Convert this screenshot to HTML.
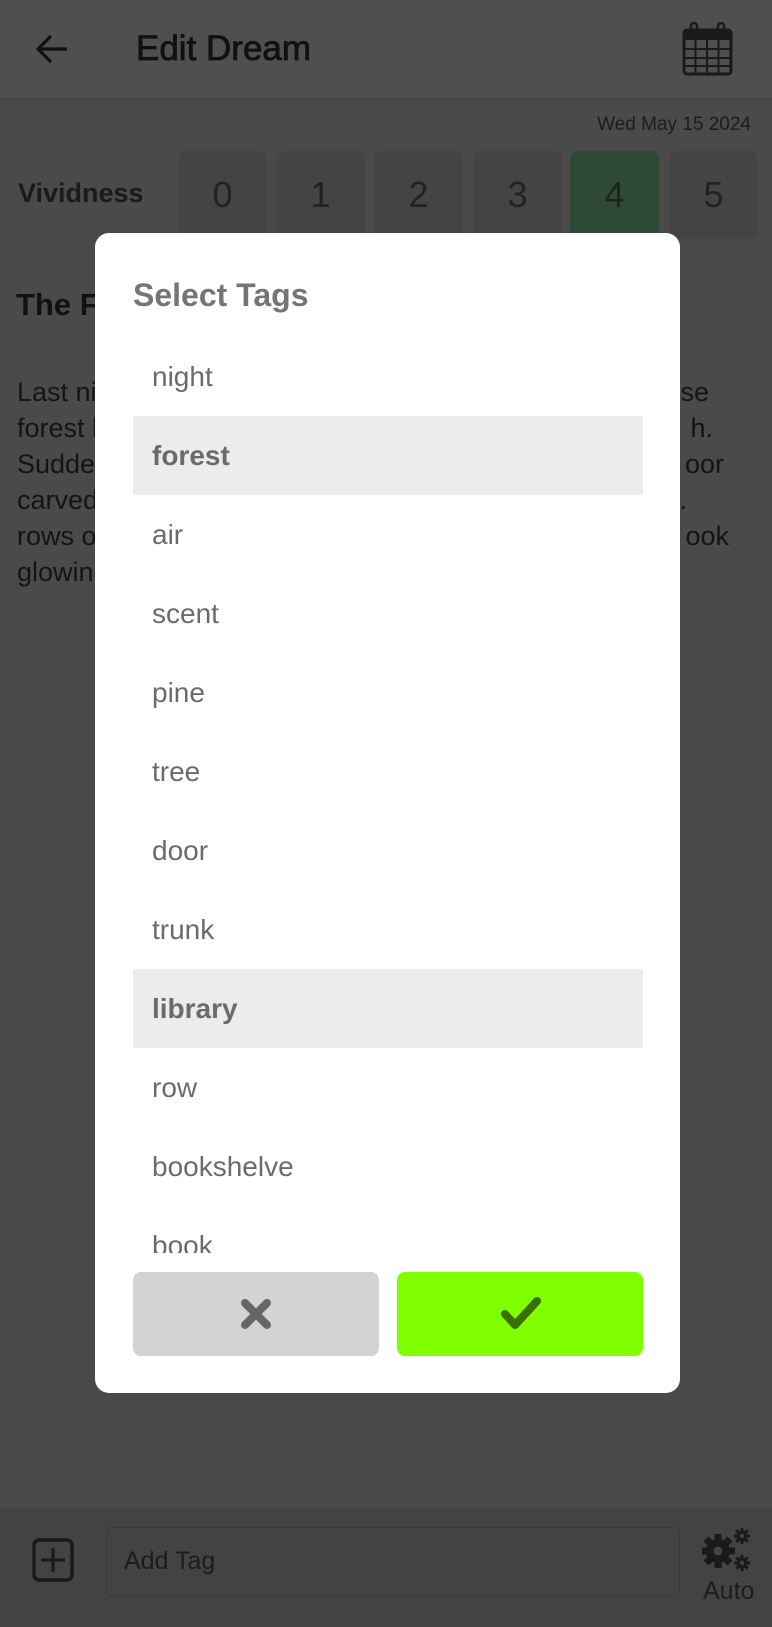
<!DOCTYPE html>
<html><head><meta charset="utf-8"><style>
*{margin:0;padding:0;box-sizing:border-box}
body{width:772px;height:1627px;background:#4a4a4a;font-family:"Liberation Sans",sans-serif;position:relative;overflow:hidden}
.abs{position:absolute}
.hdr{left:0;top:0;width:772px;height:100px;background:#4f4f4f;border-bottom:2px solid #454545}
.box{top:151px;width:89px;height:88px;background:#444;border-radius:8px;color:#222;font-size:36px;text-align:center;line-height:88px}
.p{left:17px;font-size:27px;color:#141414;white-space:nowrap;line-height:36px}
.r{font-size:27px;color:#141414;white-space:nowrap;line-height:36px}
.dlg{left:95px;top:233px;width:585px;height:1160px;background:#fff;border-radius:14px}
.row{position:absolute;left:38px;width:510px;height:79px;line-height:79px;padding-left:19px;font-size:28px;color:#6b6b6b}
.sel{background:#ececec;font-weight:bold}
.bar{left:0;top:1508px;width:772px;height:119px;background:#434343}
</style></head><body>
<div class="abs hdr"></div>
<svg class="abs" style="left:35px;top:33px" width="34" height="32" viewBox="0 0 34 32"><path d="M32 16H4M16 3L3 16l13 13" stroke="#111" stroke-width="3.2" fill="none"/></svg>
<div class="abs" style="left:136px;top:29px;font-size:35px;color:#111;-webkit-text-stroke:0.8px #111">Edit Dream</div>
<svg class="abs" style="left:682px;top:22px" width="51" height="54" viewBox="0 0 51 54"><rect x="2" y="8" width="47" height="44" rx="3" fill="none" stroke="#1a1a1a" stroke-width="3"/><rect x="2" y="8" width="47" height="10" fill="#1a1a1a"/><rect x="9" y="1" width="6" height="13" rx="3" fill="none" stroke="#1a1a1a" stroke-width="2.5"/><rect x="36" y="1" width="6" height="13" rx="3" fill="none" stroke="#1a1a1a" stroke-width="2.5"/><path d="M2 27H49M2 36H49M2 44H49M13.5 18V52M25 18V52M36.5 18V52" stroke="#1a1a1a" stroke-width="2"/></svg>
<div class="abs" style="right:21px;top:114px;font-size:19px;color:#1c1c1c">Wed May 15 2024</div>
<div class="abs" style="left:18px;top:178px;font-size:27px;font-weight:bold;color:#1a1a1a">Vividness</div>
<div class="abs box" style="left:178px">0</div>
<div class="abs box" style="left:276px">1</div>
<div class="abs box" style="left:374px">2</div>
<div class="abs box" style="left:473px">3</div>
<div class="abs box" style="left:570px;background:#2e4a34">4</div>
<div class="abs box" style="left:669px">5</div>
<div class="abs" style="left:16px;top:287px;font-size:31px;font-weight:bold;color:#111">The Forest Library</div>
<div class="abs p" style="top:374px">Last night I dreamt I was walking</div>
<div class="abs p" style="top:410px">forest lit only by moonlight</div>
<div class="abs p" style="top:446px">Suddenly I found a tree</div>
<div class="abs p" style="top:482px">carved into it and inside</div>
<div class="abs p" style="top:518px">rows of bookshelves went</div>
<div class="abs p" style="top:554px">glowing softly.</div>
<div class="abs r" style="right:63px;top:374px">dense</div>
<div class="abs r" style="right:59px;top:410px">h.</div>
<div class="abs r" style="right:48px;top:446px">oor</div>
<div class="abs r" style="right:85px;top:482px">.</div>
<div class="abs r" style="right:43px;top:518px">ook</div>
<div class="abs bar"></div>
<svg class="abs" style="left:32px;top:1538px" width="44" height="44" viewBox="0 0 44 44"><rect x="2" y="2" width="38" height="40" rx="5" fill="none" stroke="#1a1a1a" stroke-width="3.5"/><path d="M21 10V34M9 22H33" stroke="#1a1a1a" stroke-width="3"/></svg>
<div class="abs" style="left:106px;top:1527px;width:574px;height:70px;border:1.5px solid #3a3a3a;border-radius:6px"></div>
<div class="abs" style="left:124px;top:1547px;font-size:25px;color:#1c1c1c">Add Tag</div>
<svg class="abs" style="left:702px;top:1527px" width="50" height="46" viewBox="0 0 50 46"><g fill="#1a1a1a"><circle cx="16" cy="24" r="12"/><g stroke="#1a1a1a" stroke-width="7"><path d="M16 7V41M-1 24H33M4 12L28 36M4 36L28 12"/></g><circle cx="40" cy="9" r="5.5"/><g stroke="#1a1a1a" stroke-width="3"><path d="M40 1V17M32 9H48M34.3 3.3L45.7 14.7M34.3 14.7L45.7 3.3"/></g><circle cx="40" cy="36" r="5.5"/><g stroke="#1a1a1a" stroke-width="3"><path d="M40 28V44M32 36H48M34.3 30.3L45.7 41.7M34.3 41.7L45.7 30.3"/></g></g><circle cx="16" cy="24" r="4.5" fill="#434343"/><circle cx="40" cy="9" r="2.2" fill="#434343"/><circle cx="40" cy="36" r="2.2" fill="#434343"/></svg>
<div class="abs" style="left:703px;top:1577px;font-size:25px;color:#1c1c1c">Auto</div>

<div class="abs dlg">
<div class="abs" style="left:38px;top:44px;font-size:32px;font-weight:bold;color:#757575">Select Tags</div>
<div class="abs" style="left:0;top:104px;width:585px;height:916px;overflow:hidden">
<div class="row" style="top:0">night</div>
<div class="row sel" style="top:79px">forest</div>
<div class="row" style="top:158px">air</div>
<div class="row" style="top:237px">scent</div>
<div class="row" style="top:316px">pine</div>
<div class="row" style="top:395px">tree</div>
<div class="row" style="top:474px">door</div>
<div class="row" style="top:553px">trunk</div>
<div class="row sel" style="top:632px">library</div>
<div class="row" style="top:711px">row</div>
<div class="row" style="top:790px">bookshelve</div>
<div class="row" style="top:869px">book</div>
</div>
<div class="abs" style="left:38px;top:1039px;width:246px;height:84px;background:#d3d3d3;border-radius:8px"></div>
<svg class="abs" style="left:145px;top:1066px" width="32" height="30" viewBox="0 0 32 30"><path d="M5 4L27 26M27 4L5 26" stroke="#666" stroke-width="8" stroke-linecap="round"/></svg>
<div class="abs" style="left:302px;top:1039px;width:246px;height:84px;background:#80ff00;border-radius:8px"></div>
<svg class="abs" style="left:405px;top:1064px" width="42" height="34" viewBox="0 0 42 34"><path d="M5 17L15 28L37 4" stroke="#3a7000" stroke-width="8" fill="none" stroke-linecap="round" stroke-linejoin="round"/></svg>
</div>
</body></html>
